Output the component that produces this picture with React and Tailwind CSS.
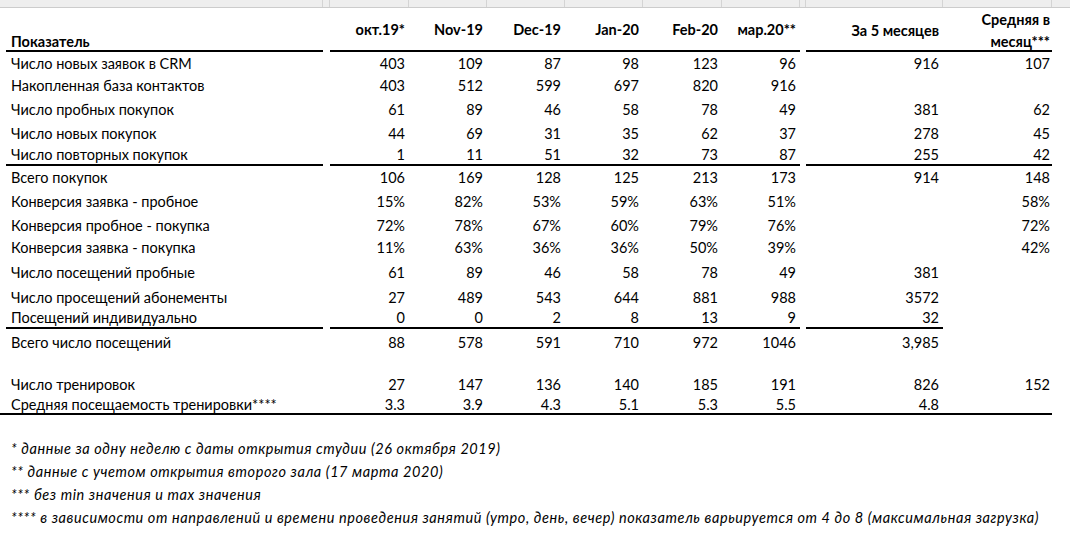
const MONTHS = ['окт.19*', 'Nov-19', 'Dec-19', 'Jan-20', 'Feb-20', 'мар.20**']

const ROWS = [
  { h: 'h-[22px]', label: 'Число новых заявок в CRM', v: ['403', '109', '87', '98', '123', '96'], total: '916', avg: '107' },
  { h: 'h-[23px]', label: 'Накопленная база контактов', v: ['403', '512', '599', '697', '820', '916'], total: '', avg: '' },
  { h: 'h-[25px]', label: 'Число пробных покупок', v: ['61', '89', '46', '58', '78', '49'], total: '381', avg: '62' },
  { h: 'h-[22px]', label: 'Число новых покупок', v: ['44', '69', '31', '35', '62', '37'], total: '278', avg: '45' },
  { h: 'h-[22px]', label: 'Число повторных покупок', v: ['1', '11', '51', '32', '73', '87'], total: '255', avg: '42', line: 'all' },
  { h: 'h-[23px]', label: 'Всего покупок', v: ['106', '169', '128', '125', '213', '173'], total: '914', avg: '148' },
  { h: 'h-[25px]', label: 'Конверсия заявка - пробное', v: ['15%', '82%', '53%', '59%', '63%', '51%'], total: '', avg: '58%' },
  { h: 'h-[22px]', label: 'Конверсия пробное - покупка', v: ['72%', '78%', '67%', '60%', '79%', '76%'], total: '', avg: '72%' },
  { h: 'h-[23px]', label: 'Конверсия заявка - покупка', v: ['11%', '63%', '36%', '36%', '50%', '39%'], total: '', avg: '42%' },
  { h: 'h-[27px]', label: 'Число посещений пробные', v: ['61', '89', '46', '58', '78', '49'], total: '381', avg: '' },
  { h: 'h-[22px]', label: 'Число просещений абонементы', v: ['27', '489', '543', '644', '881', '988'], total: '3572', avg: '' },
  { h: 'h-[21px]', label: 'Посещений индивидуально', v: ['0', '0', '2', '8', '13', '9'], total: '32', avg: '', line: 'noavg' },
  { h: 'h-[26px]', label: 'Всего число посещений', v: ['88', '578', '591', '710', '972', '1046'], total: '3,985', avg: '' },
  { h: 'h-[18px]', spacer: true },
  { h: 'h-[22px]', label: 'Число тренировок', v: ['27', '147', '136', '140', '185', '191'], total: '826', avg: '152' },
  { h: 'h-[20px]', label: 'Средняя посещаемость тренировки****', v: ['3.3', '3.9', '4.3', '5.1', '5.3', '5.5'], total: '4.8', avg: '', line: 'full' },
]

const NOTES = [
  '* данные за одну неделю с даты открытия студии (26 октября 2019)',
  '** данные с учетом открытия второго зала (17 марта 2020)',
  '*** без min значения и max значения',
  '**** в зависимости от направлений и времени проведения занятий (утро, день, вечер) показатель варьируется от 4 до 8 (максимальная загрузка)',
]

const COLS = 'grid grid-cols-[6px_317px_7px_79px_78px_78px_78px_79px_78px_6px_137px_109px]'

function Row({ r }) {
  if (r.spacer) return <div className={r.h} />
  const ln = r.line === 'all' || r.line === 'noavg' ? ' border-b-2 border-black' : ''
  const lnAvg = r.line === 'all' ? ' border-b-2 border-black' : ''
  return (
    <div className={`${COLS} ${r.h} w-[1052px] ${r.line === 'full' ? 'border-b-2 border-black' : ''}`}>
      <div />
      <div className={`flex items-center pl-[5px]${ln}`}>{r.label}</div>
      <div />
      {r.v.map((x, i) => (
        <div key={i} className={`flex items-center justify-end pr-[4px]${ln}`}>{x}</div>
      ))}
      <div />
      <div className={`flex items-center justify-end pr-[4px]${ln}`}>{r.total}</div>
      <div className={`flex items-center justify-end pr-[2px]${lnAvg}`}>{r.avg}</div>
    </div>
  )
}

export default function App() {
  return (
    <div className="w-[1070px] h-[550px] bg-white text-black text-[14.5px] leading-[17px] overflow-hidden" style={{ fontFamily: 'Lato, "Liberation Sans", sans-serif' }}>
      {/* sheet strip */}
      <div className="flex h-[8px] bg-[#eeeeee] border-b border-[#cccccc]">
        <div className="w-[323px] border-r border-[#d4d4d4]" />
        <div className="w-[7px] border-r border-[#d4d4d4]" />
        <div className="w-[79px] border-r border-[#d4d4d4]" />
        <div className="w-[78px] border-r border-[#d4d4d4]" />
        <div className="w-[78px] border-r border-[#d4d4d4]" />
        <div className="w-[78px] border-r border-[#d4d4d4]" />
        <div className="w-[79px] border-r border-[#d4d4d4]" />
        <div className="w-[78px] border-r border-[#d4d4d4]" />
        <div className="w-[6px] border-r border-[#d4d4d4]" />
        <div className="w-[137px] border-r border-[#d4d4d4]" />
        <div className="w-[109px] border-r border-[#d4d4d4]" />
        <div className="flex-1" />
      </div>

      {/* header */}
      <div className={`${COLS} grid-rows-[44px] h-[44px] w-[1052px] font-bold`}>
        <div />
        <div className="flex items-end pl-[5px] border-b-2 border-black">Показатель</div>
        <div />
        {MONTHS.map(m => (
          <div key={m} className="flex items-center justify-end pr-[4px] border-b-2 border-black">{m}</div>
        ))}
        <div />
        <div className="flex items-center justify-end pr-[4px] pt-[2px] border-b-2 border-black">За 5 месяцев</div>
        <div className="flex items-end justify-end text-right pr-[2px] border-b-2 border-black min-h-0">
          <span className="leading-[22px] mb-[-3px]">Средняя в<br />месяц***</span>
        </div>
      </div>

      {ROWS.map((r, i) => <Row key={i} r={r} />)}

      <div className="h-[22px]" />
      <div className="pl-[11px] italic tracking-[0.58px]">
        {NOTES.map(n => (
          <div key={n} className="h-[23px] flex items-center">{n}</div>
        ))}
      </div>
    </div>
  )
}
